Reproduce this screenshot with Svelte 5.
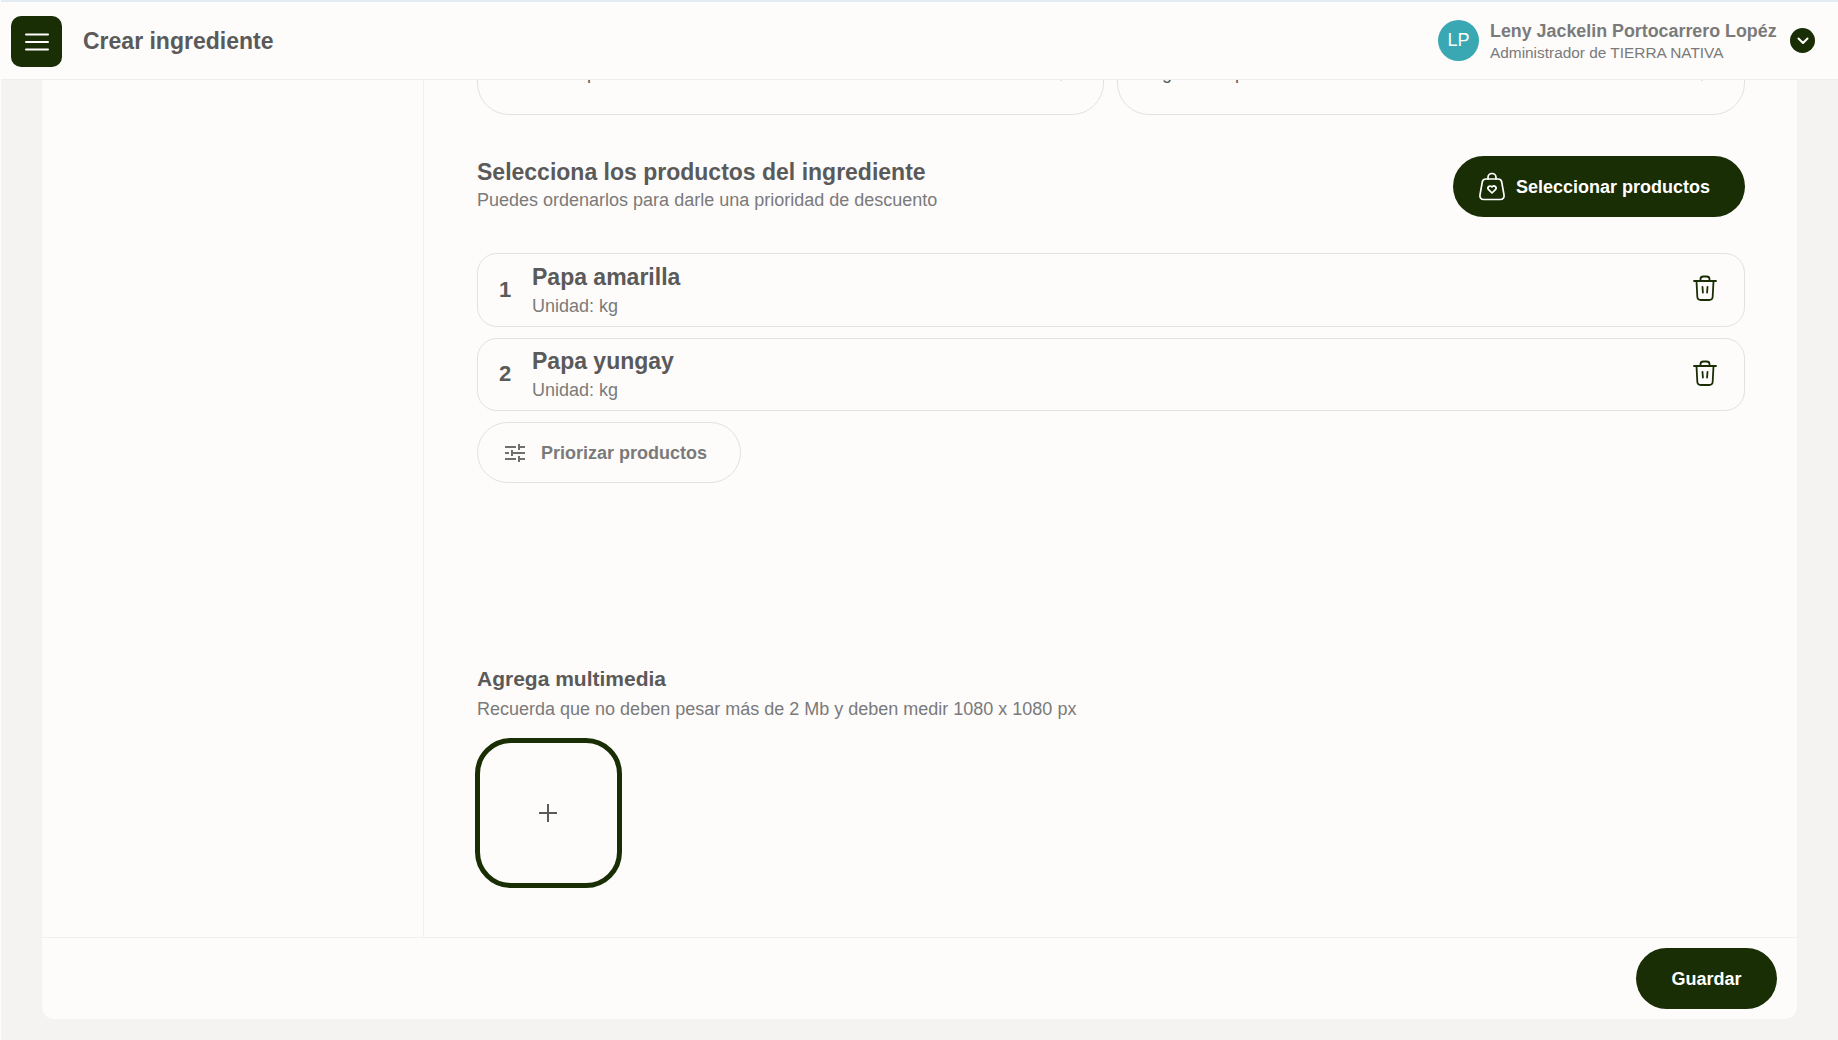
<script>
  const products = [
    { n: 1, name: 'Papa amarilla' },
    { n: 2, name: 'Papa yungay' }
  ];
</script>

<div class="app">
  <header class="topbar">
    <button class="menu" aria-label="Menú">
      <svg width="24" height="18" viewBox="0 0 24 18" fill="none" stroke="#fff" stroke-width="2" stroke-linecap="round"><path d="M1 1.500h22M1 9h22M1 16.500h22"/></svg>
    </button>
    <h1>Crear ingrediente</h1>
    <div class="user">
      <div class="avatar">LP</div>
      <div class="who">
        <div class="uname">Leny Jackelin Portocarrero Lopéz</div>
        <div class="urole">Administrador de TIERRA NATIVA</div>
      </div>
      <div class="chev">
        <svg width="12" height="8" viewBox="0 0 12 8" fill="none" stroke="#fff" stroke-width="2" stroke-linecap="round" stroke-linejoin="round"><path d="M1.500 1.500 6 6l4.500-4.500"/></svg>
      </div>
    </div>
  </header>

  <div class="page">
    <section class="card">
      <div class="upper">
        <aside class="side"></aside>
        <main class="main">
          <div class="inputs">
            <div class="input first"><span>Unidad de peso</span><svg class="tip" width="12" height="8" viewBox="0 0 12 8" fill="none" stroke="#1a2e05" stroke-width="2"><path d="M1 1l5 5 5-5"/></svg></div>
            <div class="input"><span>Regla de capacidad</span><svg class="tip" width="12" height="8" viewBox="0 0 12 8" fill="none" stroke="#1a2e05" stroke-width="2"><path d="M1 1l5 5 5-5"/></svg></div>
          </div>

          <div class="sect">
            <div class="heading">
              <h2>Selecciona los productos del ingrediente</h2>
              <p class="sub lead">Puedes ordenarlos para darle una prioridad de descuento</p>
            </div>
            <button class="pill select">
              <svg width="28" height="30" viewBox="0 0 28 30" fill="none" stroke="#fff" stroke-width="1.700" stroke-linecap="round" stroke-linejoin="round">
                <path d="M10 7V5.500a4 4 0 0 1 8 0V7"/>
                <path d="M8 7h12c2 0 3.300 1 3.700 2.800l2.300 13c.5 2.800-1 4.700-3.800 4.700H5.800c-2.800 0-4.300-1.900-3.800-4.700l2.300-13C4.700 8 6 7 8 7z"/>
                <path d="M14 21l-3.400-3.400a2.100 2.100 0 0 1 3-3l.4.400.4-.4a2.100 2.100 0 0 1 3 3z"/>
              </svg>
              <span class="label">Seleccionar productos</span>
            </button>
          </div>

          <div class="list">
            {#each products as p}
              <div class="row">
                <span class="num">{p.n}</span>
                <div class="info">
                  <div class="pname">{p.name}</div>
                  <div class="unit">Unidad: kg</div>
                </div>
                <svg class="trash" width="24" height="26" viewBox="0 0 24 26" fill="none" stroke="#1a2e05" stroke-width="1.800" stroke-linecap="round" stroke-linejoin="round">
                  <path d="M1 6h22"/>
                  <path d="M7.500 6V4C7.500 2.300 8.800 1.500 10.500 1.500h3c1.700 0 3 .8 3 2.500v2"/>
                  <path d="M3.500 6l.8 15.500c.1 2 1.500 3.500 3.500 3.500h8.400c2 0 3.400-1.500 3.500-3.500L20.500 6"/>
                  <path d="M9.500 12l.4 5.500M14.500 12l-.4 5.500"/>
                </svg>
              </div>
            {/each}
            <button class="pill ghost">
              <svg width="22" height="20" viewBox="0 0 22 20" fill="none" stroke="#6f6f6f" stroke-width="2">
                <path d="M1 4h11M15 1v6M15 4h6M1 10h4M8 7v6M8 10h13M1 16h11M15 13v6M15 16h6"/>
              </svg>
              <span class="label">Priorizar productos</span>
            </button>
          </div>

          <h3>Agrega multimedia</h3>
          <p class="sub media">Recuerda que no deben pesar más de 2 Mb y deben medir 1080 x 1080 px</p>
          <button class="add" aria-label="Agregar">
            <svg class="plus" width="20" height="20" viewBox="0 0 20 20" stroke="#5a5a5a" stroke-width="2"><path d="M10 1v18M1 10h18"/></svg>
          </button>
        </main>
      </div>
      <footer class="foot">
        <button class="pill save"><span class="label">Guardar</span></button>
      </footer>
    </section>
  </div>
</div>

<style>
  :global(body) {
    margin: 0;
    background: #f4f3f1;
  }
  .app {
    display: flex;
    flex-direction: column;
    height: 1040px;
    box-sizing: border-box;
    border-left: 1px solid #fdfcfa;
    overflow: hidden;
    font-family: "Liberation Sans", Arial, sans-serif;
    color: #5a5a5a;
  }
  button {
    font-family: inherit;
    cursor: pointer;
    border: 0;
    padding: 0;
  }
  .topbar {
    flex: none;
    height: 80px;
    box-sizing: border-box;
    border-top: 2px solid #e3ebf3;
    border-bottom: 1px solid #efeeec;
    background: #fdfcfa;
    display: flex;
    align-items: center;
    padding: 0 23px 0 10px;
  }
  .menu {
    width: 51px;
    height: 51px;
    margin-top: 2px;
    border-radius: 10px;
    background: #1a2e05;
    display: flex;
    align-items: center;
    justify-content: center;
  }
  h1 {
    margin: 2px 0 0 21px;
    font-size: 23px;
    font-weight: 700;
    color: #5a5a5a;
  }
  .user {
    margin-left: auto;
    display: flex;
    align-items: center;
  }
  .avatar {
    width: 41px;
    height: 41px;
    border-radius: 50%;
    background: #3aa8b2;
    color: #fff;
    font-size: 18px;
    display: flex;
    align-items: center;
    justify-content: center;
  }
  .who {
    margin-left: 11px;
    width: 300px;
    padding-top: 2px;
  }
  .uname {
    font-size: 17.850px;
    font-weight: 700;
    color: #7a7a7a;
    line-height: 22px;
  }
  .urole {
    font-size: 15.400px;
    color: #7a7a7a;
    line-height: 22px;
  }
  .chev {
    width: 25px;
    height: 25px;
    border-radius: 50%;
    background: #1a2e05;
    display: flex;
    align-items: center;
    justify-content: center;
  }
  .page {
    flex: 1;
    min-height: 0;
    display: flex;
    padding: 0 41px 21px 41px;
  }
  .card {
    flex: 1;
    background: #fdfcfa;
    border-radius: 0 0 12px 12px;
    display: flex;
    flex-direction: column;
    overflow: hidden;
  }
  .upper {
    flex: 1;
    min-height: 0;
    display: flex;
    border-bottom: 1px solid #f1f0ee;
  }
  .side {
    flex: none;
    width: 381px;
    border-right: 1px solid #f1f0ee;
  }
  .main {
    flex: 1;
    min-width: 0;
    overflow: hidden;
    padding: 0 52px 0 53px;
  }
  .inputs {
    margin-top: -37px;
    display: grid;
    grid-template-columns: 627px 1fr;
    gap: 13px;
  }
  .input {
    height: 72px;
    box-sizing: border-box;
    border: 1.500px solid #e2e1df;
    border-radius: 32px;
    padding: 18.500px 36px 0 21px;
    display: flex;
    justify-content: space-between;
    align-items: flex-start;
    font-size: 18px;
    line-height: 20px;
    color: #5a5a5a;
  }
  .first {
    padding-left: 22px;
  }
  .tip {
    margin-top: 10.500px;
  }
  .sect {
    margin-top: 41px;
    display: flex;
    justify-content: space-between;
    align-items: center;
  }
  .heading {
    padding-bottom: 2px;
  }
  h2 {
    margin: 0;
    font-size: 23px;
    line-height: 24px;
    font-weight: 700;
    color: #5a5a5a;
  }
  .sub {
    margin: 0;
    font-size: 18px;
    line-height: 22px;
    color: #7a7a7a;
  }
  .lead {
    margin-top: 5px;
  }
  .pill {
    border-radius: 31px;
    height: 61px;
    font-size: 18px;
    font-weight: 700;
    display: flex;
    align-items: center;
  }
  .label {
    padding-top: 2px;
  }
  .select {
    width: 292px;
    background: #1a2e05;
    color: #fff;
    padding-left: 25px;
    gap: 10px;
    box-sizing: border-box;
  }
  .list {
    margin-top: 36px;
    display: flex;
    flex-direction: column;
    align-items: flex-start;
    gap: 11px;
  }
  .row {
    align-self: stretch;
    height: 73.500px;
    box-sizing: border-box;
    border: 1.500px solid #e2e1df;
    border-radius: 20px;
    display: flex;
    align-items: center;
    padding: 0 27px 0 20px;
  }
  .num {
    font-size: 22px;
    font-weight: 700;
    width: 34px;
    padding-left: 1px;
    box-sizing: border-box;
  }
  .info {
    flex: 1;
    margin-top: 1px;
  }
  .pname {
    font-size: 23px;
    font-weight: 700;
    line-height: 28px;
  }
  .unit {
    font-size: 18px;
    line-height: 24px;
    color: #7a7a7a;
    margin-top: 3px;
  }
  .trash {
    margin-bottom: 3px;
  }
  .ghost {
    width: 264px;
    height: 61px;
    box-sizing: border-box;
    background: transparent;
    border: 1.500px solid #e2e1df;
    color: #7a7a7a;
    padding-left: 26px;
    gap: 15px;
  }
  h3 {
    margin: 184px 0 0;
    font-size: 21px;
    line-height: 24px;
    font-weight: 700;
    color: #5a5a5a;
  }
  .media {
    margin-top: 7px;
  }
  .add {
    margin: 18px 0 0 -2px;
    width: 147px;
    height: 150px;
    box-sizing: border-box;
    border: 5px solid #1a2e05;
    border-radius: 36px;
    background: transparent;
    display: flex;
    align-items: center;
    justify-content: center;
  }
  .plus {
    margin-right: 1px;
  }
  .foot {
    flex: none;
    height: 81px;
    box-sizing: border-box;
    display: flex;
    justify-content: flex-end;
    padding: 10px 20px 0 0;
  }
  .save {
    width: 141px;
    background: #1a2e05;
    color: #fff;
    justify-content: center;
  }
</style>
